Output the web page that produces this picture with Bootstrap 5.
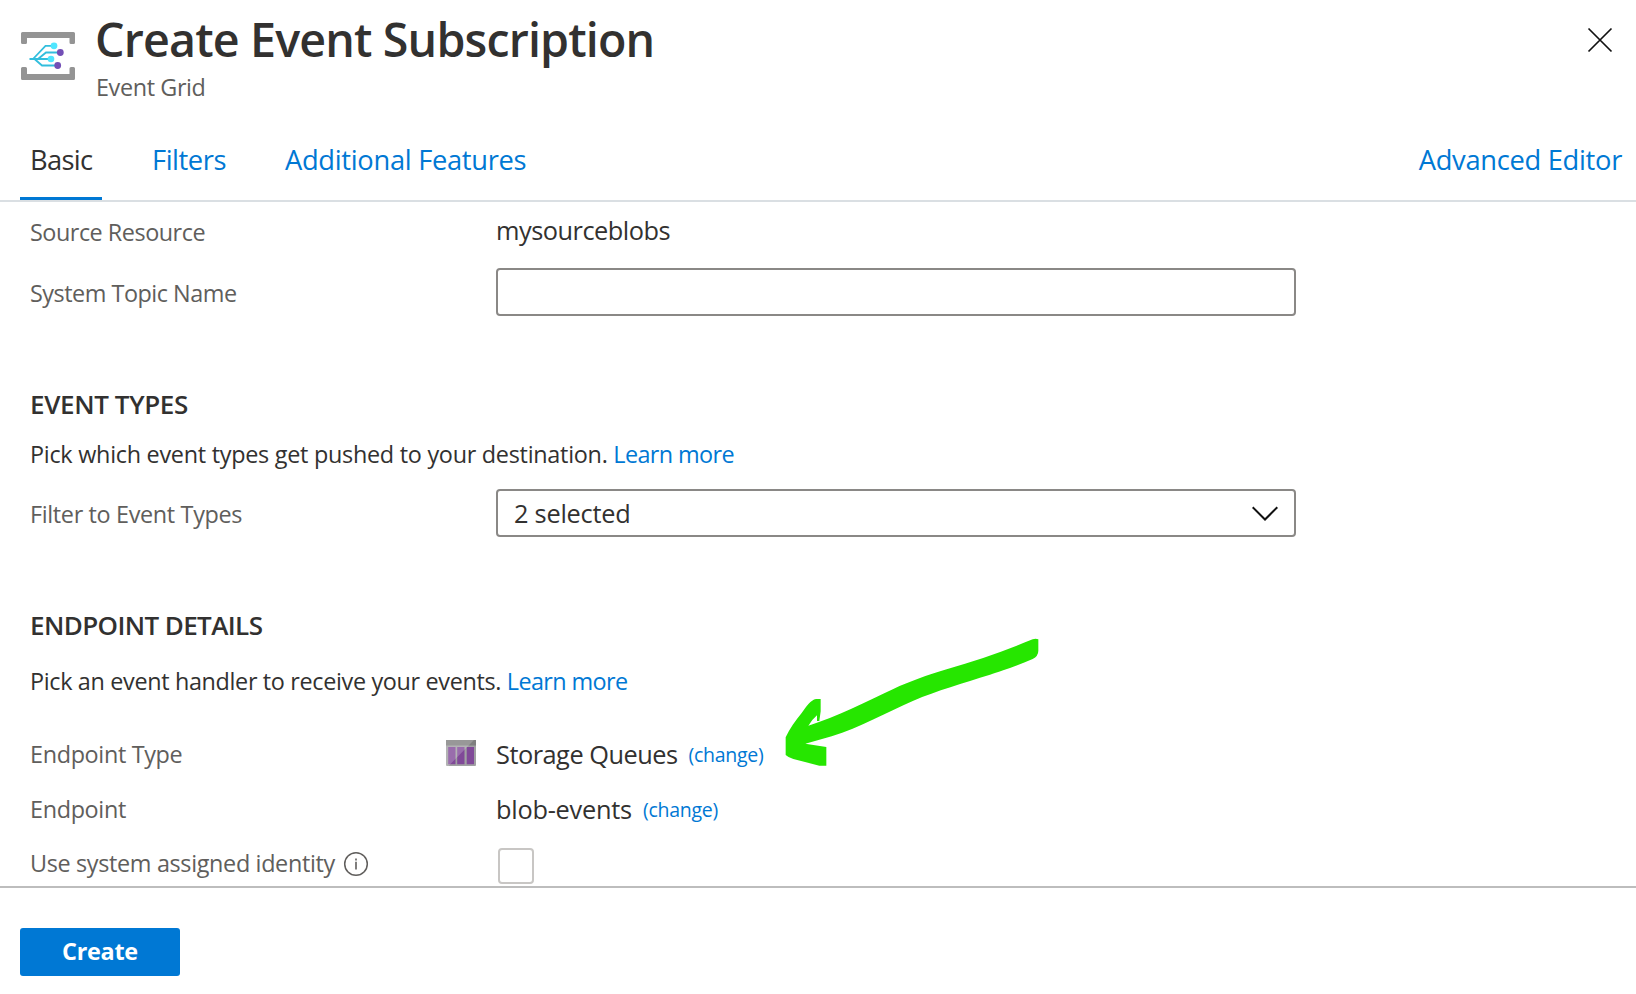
<!DOCTYPE html>
<html lang="en">
<head>
<meta charset="utf-8">
<meta name="viewport" content="width=device-width, initial-scale=1">
<title>Create Event Subscription</title>
<link href="https://cdn.jsdelivr.net/npm/bootstrap@5.3.0/dist/css/bootstrap.min.css" rel="stylesheet">
<style>
  body { font-family: "Open Sans", sans-serif; font-size: 23.4px; line-height: 32px; letter-spacing: -.34px; color: #323130; background: #fff; }
  a { color: #0078d4; }
  .blade { height: 994px; }
  .blade-head { height: 120px; padding: 0 20px 0 21px; }
  .blade-icon { margin-top: 31px; }
  .blade-heading { padding-left: 20px; }
  .blade-title { font-size: 46.6px; line-height: 60px; font-weight: 600; letter-spacing: -.84px; margin-top: 9px; }
  .blade-sub { color: #605e5c; margin: 2px 0 0 1px; letter-spacing: -.38px; }
  .blade-close { margin: 27px 3px 0 0; }
  .blade-tabs { height: 82px; border-bottom: 2px solid #dadfe3; padding: 0 14px 0 20px; font-size: 27.3px; letter-spacing: -.3px; }
  .blade-tabs .nav { gap: 40px; }
  .blade-tabs .nav-link { height: 80px; padding: 24px 9px 0 10px; line-height: 32px; color: #0078d4; border-bottom: 3px solid transparent; }
  .blade-tabs .nav-link.active { width: 82px; color: #323130; border-color: #0078d4; letter-spacing: -.65px; }
  .tab-filters { letter-spacing: -.45px; }
  .editor-link { padding-top: 24px; }
  .blade-body { height: 684px; padding: 6px 0 0 30px; }
  .field { height: 48px; }
  .field-label { width: 466px; color: #605e5c; }
  .tight { letter-spacing: -.48px; }
  .drop { padding-top: 2px; }
  .value { font-size: 25.35px; letter-spacing: -.5px; }
  .value-loose { letter-spacing: -.24px; }
  .box-input { width: 800px; height: 48px; border: 2px solid #8a8886; border-radius: 4px; padding: 0 16px; color: #323130; }
  .box-input:focus { box-shadow: none; border-color: #8a8886; }
  .section-title { font-size: 26px; line-height: 36px; font-weight: 600; letter-spacing: -.36px; margin: 70px 0 0; }
  .change-link { font-size: 19.5px; letter-spacing: -.27px; margin-left: 11px; padding-top: 2px; }
  .learn { letter-spacing: -.6px; }
  .type-icon { left: 446px; top: 538px; }
  .check-box { width: 36px; height: 36px; margin: 6px 0 0 2px; border: 2px solid #c8c6c4; border-radius: 4px; }
  .pointer { left: 760px; top: 418px; pointer-events: none; }
  .blade-foot { height: 108px; border-top: 2px solid #bdbdbd; padding: 40px 0 0 20px; }
  .create-btn { width: 160px; height: 48px; background: #0078d4; color: #fff; border: 0; border-radius: 3px; font-size: 23.4px; line-height: 32px; font-weight: 700; padding: 0 0 2px; letter-spacing: -.27px; }
</style>
</head>
<body>
<div class="blade d-flex flex-column overflow-hidden">
  <header class="blade-head d-flex align-items-start">
    <svg class="blade-icon flex-shrink-0" width="54" height="50" viewBox="0 0 54 50">
      <g fill="#949494">
        <path d="M1.500 1H52.500Q54 1 54 2.500V11.500Q54 13 52.500 13H50Q48.500 13 48.500 11.500V7H6V11.500Q6 13 4.500 13H1.500Q0 13 0 11.500V2.500Q0 1 1.500 1Z"/>
        <path d="M1.500 49H52.500Q54 49 54 47.500V37.500Q54 36 52.500 36H50Q48.500 36 48.500 37.500V43H6V37.500Q6 36 4.500 36H1.500Q0 36 0 37.500V47.500Q0 49 1.500 49Z"/>
      </g>
      <g fill="none" stroke="#32bedd" stroke-width="1.800">
        <path d="M8.500 28H29M12 28 24.500 14.800H32M17 28 25 21.500H39M13.500 28 21 34.500H36"/>
      </g>
      <g fill="#50e6ff"><circle cx="33" cy="14.800" r="3.400"/><circle cx="30" cy="28" r="3.300"/></g>
      <g fill="#734fb6"><circle cx="39.300" cy="21.500" r="3.400"/><circle cx="36.700" cy="34.500" r="3.400"/></g>
    </svg>
    <div class="blade-heading flex-grow-1">
      <h1 class="blade-title mb-0">Create Event Subscription</h1>
      <div class="blade-sub">Event Grid</div>
    </div>
    <svg class="blade-close" width="26" height="26" viewBox="0 0 26 26" fill="none" stroke="#111" stroke-width="1.700"><path d="M1.500 1.500 24.500 24.500M24.500 1.500 1.500 24.500"/></svg>
  </header>

  <nav class="blade-tabs d-flex justify-content-between flex-shrink-0">
    <div class="nav flex-nowrap">
      <a class="nav-link active" href="#">Basic</a>
      <a class="nav-link tab-filters" href="#">Filters</a>
      <a class="nav-link" href="#">Additional Features</a>
    </div>
    <a class="editor-link text-decoration-none text-nowrap" href="#">Advanced Editor</a>
  </nav>

  <main class="blade-body position-relative overflow-hidden flex-shrink-0">
    <div class="field d-flex align-items-center">
      <div class="field-label tight">Source Resource</div>
      <div class="value pb-1">mysourceblobs</div>
    </div>
    <div class="field d-flex align-items-center" style="margin-top:12px">
      <label class="field-label tight drop" for="topic">System Topic Name</label>
      <input id="topic" class="form-control box-input" type="text">
    </div>

    <h2 class="section-title">EVENT TYPES</h2>
    <p class="mb-0" style="margin-top:16px"><span style="letter-spacing:-.27px">Pick which event types get pushed to your destination.</span> <a class="learn text-decoration-none" href="#">Learn more</a></p>
    <div class="field d-flex align-items-center" style="margin-top:19px">
      <div class="field-label drop">Filter to Event Types</div>
      <div class="box-input d-flex align-items-center justify-content-between" role="combobox">
        <span class="value value-loose">2 selected</span>
        <svg width="26" height="16" viewBox="0 0 26 16" fill="none" stroke="#111" stroke-width="2"><path d="M.7 2.200 13 14.500 25.300 2.200"/></svg>
      </div>
    </div>

    <h2 class="section-title" style="letter-spacing:-.6px">ENDPOINT DETAILS</h2>
    <p class="mb-0" style="margin-top:22px">Pick an event handler to receive your events. <a class="learn text-decoration-none" href="#">Learn more</a></p>
    <div class="field d-flex align-items-center" style="margin-top:33px">
      <div class="field-label">Endpoint Type</div>
      <svg class="type-icon position-absolute" width="30" height="26" viewBox="0 0 30 26">
        <rect width="30" height="26" rx="1" fill="#a0a1a2"/>
        <rect width="30" height="5.500" fill="#7f7f7f"/>
        <path d="M2.200 7h7.300v17.200H2.200zM11.200 7h7.300v17.200h-7.300zM20.700 7H28v17.200h-7.300z" fill="#804998"/>
        <path d="M0 0H28L2.500 26H0z" fill="#fff" opacity=".2"/>
      </svg>
      <div class="value">Storage Queues</div>
      <a class="change-link text-decoration-none" href="#">(change)</a>
    </div>
    <div class="field d-flex align-items-center" style="margin-top:7px">
      <div class="field-label">Endpoint</div>
      <div class="value value-loose">blob-events</div>
      <a class="change-link text-decoration-none" href="#">(change)</a>
    </div>
    <div class="d-flex align-items-center" style="margin-top:7px;height:46px">
      <div class="field-label d-flex align-items-center">Use system assigned identity
        <svg style="margin:2px 0 0 8px" width="26" height="26" viewBox="0 0 26 26"><circle cx="13" cy="13" r="11.300" fill="none" stroke="#605e5c" stroke-width="1.500"/><path d="M13 10.800v7.700M13 7.400v2" stroke="#605e5c" stroke-width="1.600"/></svg>
      </div>
      <div class="check-box" role="checkbox" aria-checked="false"></div>
    </div>

    <svg class="pointer position-absolute" width="300" height="160" viewBox="0 0 900 480">
      <path fill="#26e600" d="M818 58Q827 55 835 58V92Q835 108 818 117C770 138 720 155 690 164C610 189 530 212 460 242C380 277 300 322 215 349L136 371 199 381V437H178L100 417Q84 412 77 405V352C90 325 105 303 125 279C140 258 152 240 168 237H182V274L178 303H171V286Q156 299 145 317C230 290 320 245 400 207C450 184 500 166 560 148C650 122 740 90 818 58Z"/>
    </svg>
  </main>

  <footer class="blade-foot flex-shrink-0">
    <button class="create-btn" type="button">Create</button>
  </footer>
</div>
<script src="https://cdn.jsdelivr.net/npm/bootstrap@5.3.0/dist/js/bootstrap.bundle.min.js"></script>
</body>
</html>
